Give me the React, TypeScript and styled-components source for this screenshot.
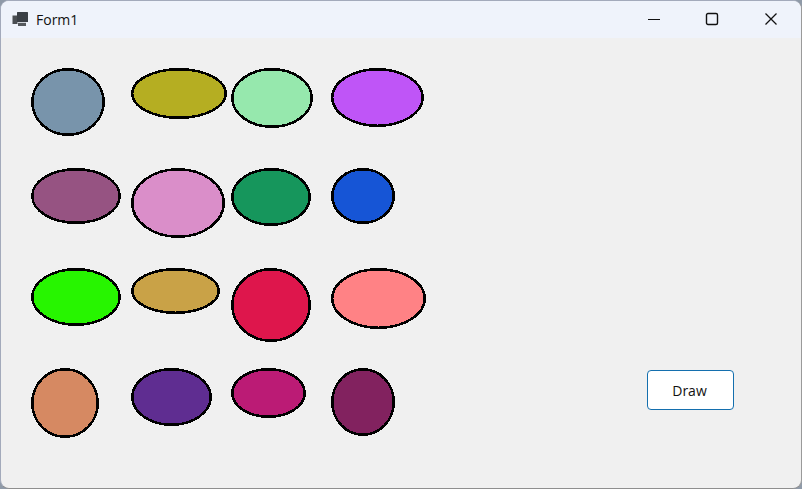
import styled, { createGlobalStyle } from "styled-components";

const GlobalStyle = createGlobalStyle`
  html, body {
    margin: 0;
    padding: 0;
    width: 802px;
    height: 489px;
    overflow: hidden;
    background: #8f9aa8;
  }
`;

const Window = styled.div`
  box-sizing: border-box;
  width: 802px;
  height: 489px;
  display: flex;
  flex-direction: column;
  background: #f0f0f0;
  border: 1px solid #a3aabb;
  border-bottom-color: #8e8e8e;
  border-right-color: #9a9a9a;
  border-radius: 9px;
  overflow: hidden;
  font-family: "Open Sans", "Noto Sans", sans-serif;
`;

const TitleBar = styled.div`
  height: 37px;
  flex: none;
  display: flex;
  align-items: center;
  background: #eff3fb;
`;

const AppIcon = styled.svg`
  width: 16px;
  height: 16px;
  margin-left: 11px;
  margin-right: 8px;
  margin-top: -2px;
`;

const Title = styled.span`
  font-size: 14px;
  color: #111;
  margin-top: -1px;
`;

const CaptionButtons = styled.div`
  margin-left: auto;
  display: flex;
  margin-right: 1px;
`;

const CaptionButton = styled.div`
  width: 58.5px;
  height: 37px;
  display: flex;
  align-items: center;
  justify-content: center;
`;

const CaptionIcon = styled.svg`
  width: 14px;
  height: 14px;
  margin-top: -2px;
`;

const Body = styled.div`
  flex: 1;
  display: flex;
  padding: 30px 67px 0 30px;
`;

const ShapeGrid = styled.div`
  display: grid;
  grid-template-columns: repeat(4, 100px);
  grid-auto-rows: 100px;
`;

const Shape = styled.svg`
  display: block;
`;

const DrawButton = styled.button`
  box-sizing: border-box;
  width: 87px;
  height: 40px;
  margin-left: auto;
  margin-top: 302px;
  background: #fff;
  border: 1px solid #146fae;
  border-radius: 4px;
  font-family: inherit;
  font-size: 14px;
  color: #111;
  padding: 0 2px 0 0;
`;

const shapes = [
  { w: 74, h: 68, color: "#7894ab" },
  { w: 96, h: 51, color: "#b5ae22" },
  { w: 82, h: 60, color: "#96e8ad" },
  { w: 93, h: 59, color: "#bf55f7" },
  { w: 90, h: 56, color: "#965382" },
  { w: 94, h: 70, color: "#da8ec9" },
  { w: 80, h: 58, color: "#16965c" },
  { w: 64, h: 56, color: "#1655d6" },
  { w: 90, h: 58, color: "#27f500" },
  { w: 89, h: 46, color: "#c9a247" },
  { w: 80, h: 74, color: "#de164c" },
  { w: 95, h: 61, color: "#ff8285" },
  { w: 68, h: 70, color: "#d68962" },
  { w: 81, h: 58, color: "#5f2d91" },
  { w: 75, h: 50, color: "#bb1b75" },
  { w: 64, h: 68, color: "#82225f" },
];

const STROKE = 2.5;

const App = () => {
  return (
    <>
      <GlobalStyle />
      <Window>
        <TitleBar>
          <AppIcon viewBox="0 0 16 16">
            <rect x="0.5" y="4.5" width="5" height="8.5" fill="#4a4e52" />
            <rect x="5" y="1" width="11" height="10" rx="0.5" fill="#3a3f45" />
            <rect x="6" y="11.8" width="8" height="3.2" fill="#55595d" />
          </AppIcon>
          <Title>Form1</Title>
          <CaptionButtons>
            <CaptionButton>
              <CaptionIcon viewBox="0 0 14 14">
                <path d="M1 7.5H13" stroke="#111" strokeWidth="1.2" fill="none" />
              </CaptionIcon>
            </CaptionButton>
            <CaptionButton>
              <CaptionIcon viewBox="0 0 14 14">
                <rect x="1.5" y="1.5" width="11" height="11" rx="1.5" stroke="#111" strokeWidth="1.4" fill="none" />
              </CaptionIcon>
            </CaptionButton>
            <CaptionButton>
              <CaptionIcon viewBox="0 0 14 14">
                <path d="M1.5 1.5L12.5 12.5M12.5 1.5L1.5 12.5" stroke="#111" strokeWidth="1.3" fill="none" />
              </CaptionIcon>
            </CaptionButton>
          </CaptionButtons>
        </TitleBar>
        <Body>
          <ShapeGrid>
            {shapes.map((s, i) => (
              <Shape key={i} width={s.w} height={s.h} shapeRendering="crispEdges">
                <ellipse
                  cx={s.w / 2}
                  cy={s.h / 2}
                  rx={s.w / 2 - STROKE / 2}
                  ry={s.h / 2 - STROKE / 2}
                  fill={s.color}
                  stroke="#000"
                  strokeWidth={STROKE}
                />
              </Shape>
            ))}
          </ShapeGrid>
          <DrawButton>Draw</DrawButton>
        </Body>
      </Window>
    </>
  );
};

export default App;
